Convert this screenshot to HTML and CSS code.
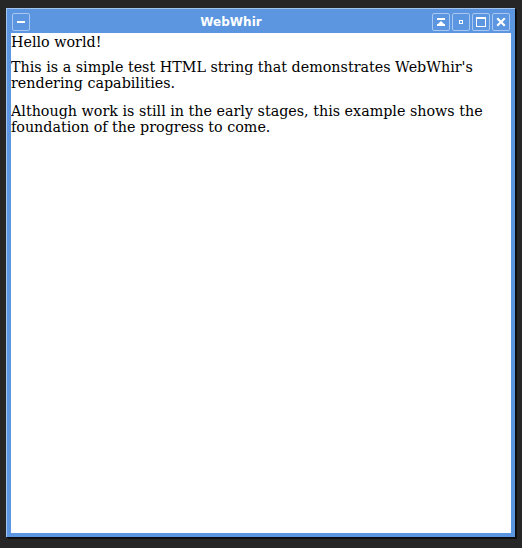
FILE: index.html
```html
<!DOCTYPE html>
<html>
<head>
<meta charset="utf-8">
<link rel="stylesheet" href="styles.css">
</head>
<body>
<div class="window">
  <div class="titlebar">
    <div class="btn"><svg width="16" height="16" viewBox="0 0 16 16"><rect x="4" y="7" width="8" height="2" fill="#fff"/></svg></div>
    <div class="title">WebWhir</div>
    <div class="btns">
      <div class="btn"><svg width="16" height="16" viewBox="0 0 16 16"><rect x="4" y="4" width="8" height="2" fill="#fff"/><polygon points="8,7 11,10 5,10" fill="#fff"/><rect x="4" y="10" width="8" height="2" fill="#fff"/></svg></div>
      <div class="btn"><svg width="16" height="16" viewBox="0 0 16 16"><rect x="6.5" y="6.5" width="3" height="3" fill="none" stroke="#fff" stroke-width="1"/></svg></div>
      <div class="btn"><svg width="16" height="16" viewBox="0 0 16 16"><rect x="3.5" y="3.5" width="9" height="9" fill="none" stroke="#fff" stroke-width="1"/><rect x="3" y="3" width="10" height="2" fill="#fff"/></svg></div>
      <div class="btn"><svg width="16" height="16" viewBox="0 0 16 16"><path d="M5 5 L11 11 M11 5 L5 11" stroke="#fff" stroke-width="2.2" stroke-linecap="square"/></svg></div>
    </div>
  </div>
  <div class="content">
    Hello world!
    <p class="p1">This is a simple test HTML string that demonstrates WebWhir's rendering capabilities.</p>
    <p class="p2">Although work is still in the early stages, this example shows the foundation of the progress to come.</p>
  </div>
</div>
</body>
</html>
```
FILE: styles.css
```css
html, body {
  margin: 0;
  padding: 0;
  background: #262626;
  height: 100%;
}
.window {
  box-sizing: border-box;
  width: 509px;
  height: 529px;
  margin: 8px 0 0 6px;
  background: #5c96e0;
  border-top: 1px solid #a3c4ef;
  border-left: 1px solid #a3c4ef;
  box-shadow: 1px 1px 0 #0a0a0a, 2px 2px 0 #111;
  padding: 0 4px 4px 4px;
  display: flex;
  flex-direction: column;
}
.titlebar {
  height: 24px;
  flex: none;
  box-sizing: border-box;
  padding: 4px 1px 0 1px;
  display: flex;
  align-items: flex-start;
}
.title {
  flex: 1;
  text-align: center;
  color: #fff;
  font-family: "DejaVu Sans", sans-serif;
  font-weight: bold;
  font-size: 12px;
  line-height: 16px;
  padding-top: 1px;
}
.btns {
  display: flex;
  gap: 2px;
}
.btn {
  width: 16px;
  height: 16px;
  border: 1px solid #a9c8f2;
  border-radius: 2px;
  display: flex;
}
.content {
  flex: 1;
  background: #fff;
  color: #000;
  font-family: "DejaVu Serif", serif;
  font-size: 14.3px;
  line-height: 16px;
  padding-top: 1px;
  overflow: hidden;
}
.content p {
  margin: 0;
}
.content .p1 {
  margin-top: 9px;
}
.content .p2 {
  margin-top: 12px;
}
```
